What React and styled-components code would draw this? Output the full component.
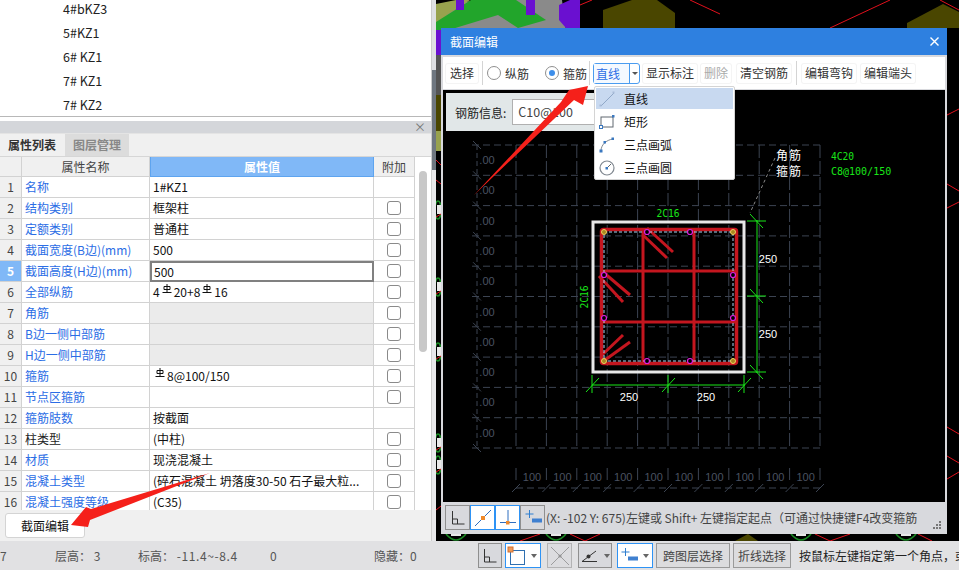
import React from 'react'
import styled, { createGlobalStyle } from 'styled-components'

const GlobalStyle = createGlobalStyle`
   html, body {
      margin: 0;
      padding: 0;
      background: #000;
   }
   body {
      font-family: 'Noto Sans CJK SC', 'Noto Sans', sans-serif;
      font-size: 12px;
      color: #111;
   }
`

const Page = styled.div`
   position: relative;
   width: 959px;
   height: 570px;
   overflow: hidden;
   display: flex;
   flex-direction: column;
`
const Main = styled.div`
   display: flex;
   height: 541px;
`

/* left side */
const LeftPanel = styled.div`
   width: 431px;
   background: #fff;
   display: flex;
   flex-direction: column;
`
const TreeList = styled.ul`
   list-style: none;
   margin: 0;
   padding: 0 0 0 63px;
   height: 116px;
   border-bottom: 1px solid #b8b8b8;
   overflow: hidden;
`
const TreeItem = styled.li`
   height: 24px;
   line-height: 18px;
   font-size: 12.5px;
   white-space: pre;
   color: #222;
`
const DockHeader = styled.div`
   margin-top: 4px;
   height: 12px;
   background: #d4d6da;
   display: flex;
   justify-content: flex-end;
   align-items: center;
   padding-right: 5px;
   color: #777;
   border-bottom: 1px solid #e4e4e4;
`
const TabBar = styled.div`
   display: flex;
   height: 22px;
   background: #f0f0f0;
`
const Tab = styled.div`
   width: 64px;
   height: 22px;
   line-height: 22px;
   text-align: center;
   font-weight: 700;
   font-size: 12px;
   margin-right: 1px;
   background: ${(p) => (p.$active ? '#f0f0f0' : '#dcdcdc')};
   color: ${(p) => (p.$active ? '#333' : '#888')};
`
const TableWrap = styled.div`
   display: flex;
   height: 355px;
   overflow: hidden;
   border-top: 1px solid #d6d6d6;
`
const Table = styled.div`
   width: 415px;
   flex: none;
`
const Row = styled.div`
   display: grid;
   grid-template-columns: 22px 128px 224px 41px;
   height: ${(p) => (p.$head ? 20 : 21)}px;
`
const Cell = styled.div`
   box-sizing: border-box;
   border-right: 1px solid #d2d2d2;
   border-bottom: 1px solid #d2d2d2;
   padding-left: 3px;
   line-height: 20px;
   font-size: 12px;
   white-space: nowrap;
   overflow: hidden;
`
const HeadCell = styled(Cell)`
   padding: 0;
   text-align: center;
   line-height: 19px;
   background: ${(p) => (p.$active ? '#80b8f7' : '#f0f0f0')};
   color: ${(p) => (p.$active ? '#fff' : '#444')};
   font-weight: ${(p) => (p.$active ? 700 : 400)};
   ${(p) => p.$active && 'border: 1px solid #5ea4ef; border-top: none;'}
`
const NumCell = styled(Cell)`
   padding: 0;
   text-align: center;
   background: ${(p) => (p.$active ? '#80b8f7' : '#f0f0f0')};
   color: ${(p) => (p.$active ? '#fff' : '#444')};
   font-weight: ${(p) => (p.$active ? 700 : 400)};
`
const NameCell = styled(Cell)`
   color: ${(p) => (p.$plain ? '#222' : '#2b6de5')};
`
const ValueCell = styled(Cell)`
   color: #111;
   background: ${(p) => (p.$locked ? '#ebebeb' : '#fff')};
   ${(p) => p.$focus && 'border: 2px solid #808080; padding-left: 2px; line-height: 17px;'}
`
const CheckCell = styled(Cell)`
   padding: 0;
   display: flex;
   align-items: center;
   justify-content: center;
`
const Check = styled.span`
   width: 12px;
   height: 12px;
   border: 1px solid #8a8a8a;
   border-radius: 3px;
   background: #fff;
`
const RebarMark = styled.svg`
   width: 10px;
   height: 10px;
   margin: 0 2px 0 2px;
   vertical-align: 3px;
`
const ScrollTrack = styled.div`
   flex: 1;
   padding: 14px 4px 0;
`
const ScrollThumb = styled.div`
   height: 181px;
   width: 8px;
   border-radius: 4px;
   background: #c8c8c8;
`
const ButtonRow = styled.div`
   flex: 1;
   background: #f0f0f0;
   padding: 3px 5px;
`
const EditButton = styled.button`
   width: 80px;
   height: 25px;
   padding: 0;
   border: 1px solid #d4d4d4;
   border-radius: 3px;
   background: #fff;
   font: inherit;
   color: #111;
`
const Splitter = styled.div`
   width: 5px;
   background: linear-gradient(#dfe0e3 70px, #6f7780 70px, #6f7780 170px, #e8e8ea 170px);
   border-left: 1px solid #ccc;
   box-sizing: border-box;
`

/* 3d view and the floating dialog */
const Viewport = styled.div`
   position: relative;
   flex: 1;
   background: #000;
`
const SceneSvg = styled.svg`
   display: block;
   width: 523px;
   height: 541px;
`
const Dialog = styled.div`
   position: absolute;
   left: 5px;
   top: 28px;
   width: 506px;
   height: 506px;
   box-sizing: border-box;
   background: #d8d9dd;
   display: flex;
   flex-direction: column;
`
const TitleBar = styled.div`
   height: 27px;
   flex: none;
   background: #2e80e0;
   color: #fff;
   display: flex;
   align-items: center;
   justify-content: space-between;
   padding: 0 8px 0 9px;
`
const ToolBar = styled.div`
   margin: 2px 2px 0;
   height: 32px;
   flex: none;
   background: #fff;
   display: flex;
   align-items: center;
   padding-left: 2px;
   box-sizing: border-box;
`
const ToolButton = styled.div`
   height: 21px;
   line-height: 20px;
   padding: 0 ${(p) => p.$pad ?? 4}px;
   margin-right: ${(p) => p.$gap ?? 0}px;
   border-radius: 3px;
   box-shadow: 0 0 0 1px #f4f4f4 inset;
   white-space: nowrap;
   color: ${(p) => (p.$disabled ? '#aaa' : '#333')};
`
const ToolSep = styled.div`
   width: 1px;
   height: 24px;
   background: #d4d4d4;
   margin: 0 ${(p) => p.$right ?? 4}px 0 ${(p) => p.$left ?? 2}px;
`
const RadioLabel = styled.label`
   display: flex;
   align-items: center;
   gap: 4px;
   margin-right: ${(p) => p.$gap ?? 0}px;
   color: #333;
`
const Radio = styled.span`
   width: 12px;
   height: 12px;
   border: 1px solid #8f8f8f;
   border-radius: 50%;
   background: #fff;
   display: flex;
   align-items: center;
   justify-content: center;
   &::after {
      content: '';
      display: ${(p) => (p.$on ? 'block' : 'none')};
      width: 6px;
      height: 6px;
      border-radius: 50%;
      background: #3d8eea;
   }
`
const Combo = styled.div`
   display: flex;
   width: 47px;
   height: 21px;
   margin-right: 2px;
   box-sizing: border-box;
   border: 1px solid #4a9cf0;
   border-radius: 3px;
   line-height: 19px;
`
const ComboText = styled.div`
   flex: 1;
   padding-left: 2px;
   color: #2b6de5;
   background: #f4f9ff;
   border-right: 1px solid #4a9cf0;
`
const ComboArrow = styled.div`
   width: 9px;
   display: flex;
   align-items: center;
   justify-content: center;
   &::after {
      content: '';
      border: 3px solid transparent;
      border-top: 3px solid #555;
      margin-top: 3px;
   }
`
const Menu = styled.div`
   position: absolute;
   left: 153px;
   top: 58px;
   width: 141px;
   height: 94px;
   box-sizing: border-box;
   padding: 1px 1px;
   background: #fff;
   border: 1px solid #d4d4d4;
   border-radius: 2px;
   z-index: 2;
`
const MenuItem = styled.div`
   display: flex;
   align-items: center;
   height: ${(p) => (p.$active ? 21 : 23)}px;
   padding-left: 3px;
   margin-bottom: ${(p) => (p.$active ? 1 : 0)}px;
   background: ${(p) => (p.$active ? '#c8d9f0' : 'transparent')};
   color: #111;
   svg {
      width: 16px;
      height: 16px;
      margin-right: 9px;
   }
`
const Drawing = styled.div`
   position: relative;
   margin: 1px 2px 0;
   height: 412px;
   flex: none;
   background: #000;
`
const DrawingSvg = styled.svg`
   display: block;
   width: 502px;
   height: 412px;
`
const InfoBar = styled.div`
   position: absolute;
   left: 3px;
   top: 3px;
   width: 160px;
   height: 38px;
   background: #e1e7e8;
   display: flex;
   align-items: center;
   padding-left: 9px;
   box-sizing: border-box;
   gap: 6px;
   color: #222;
`
const InfoInput = styled.div`
   flex: 1;
   height: 26px;
   line-height: 24px;
   box-sizing: border-box;
   border: 1px solid #b0b0b0;
   background: #fff;
   padding-left: 5px;
   font-size: 12.5px;
   color: #444;
`
const DialogFoot = styled.div`
   position: relative;
   flex: 1;
   display: flex;
   align-items: center;
   padding: 0 0 1px 4px;
   overflow: hidden;
`
const FootText = styled.div`
   margin-left: 1px;
   color: #444;
   white-space: nowrap;
`
const Grip = styled.svg`
   position: absolute;
   right: 6px;
   bottom: 5px;
   width: 8px;
   height: 8px;
`
const IconButton = styled.div`
   width: ${(p) => p.$w ?? 25}px;
   height: 25px;
   box-sizing: border-box;
   flex: none;
   margin-right: ${(p) => p.$gap ?? 0}px;
   display: flex;
   align-items: center;
   justify-content: ${(p) => (p.$w > 25 ? 'flex-start' : 'center')};
   border: ${(p) => (p.$on ? '1px solid #2e93f5' : '1px solid #8f8f8f')};
   background: ${(p) => (p.$on ? '#fff' : '#d8d9dd')};
   opacity: ${(p) => (p.$disabled ? 0.55 : 1)};
   svg {
      width: 22px;
      height: 22px;
      flex: none;
   }
`
const MiniCaret = styled.span`
   margin-left: 3px;
   border: 3px solid transparent;
   border-top: 4px solid #666;
   margin-top: 4px;
`

/* status bar */
const StatusBar = styled.div`
   height: 29px;
   background: #e1e1e3;
   display: flex;
   align-items: center;
   color: #555;
   overflow: hidden;
`
const StatusItem = styled.span`
   flex: none;
   width: ${(p) => p.$w}px;
   white-space: pre;
`
const Spaced = styled.span`
   letter-spacing: 0.6px;
`
const StatusTools = styled.div`
   display: flex;
   align-items: center;
   gap: 0;
   flex: none;
`
const TextButton = styled.div`
   height: 25px;
   line-height: 23px;
   box-sizing: border-box;
   padding: 0 ${(p) => p.$pad ?? 6}px;
   margin-right: 3px;
   border: 1px solid #9a9a9a;
   background: #dcdcde;
   color: #444;
   white-space: nowrap;
`
const Hint = styled.div`
   margin-left: 5px;
   color: #222;
   white-space: nowrap;
`
const Arrows = styled.svg`
   position: absolute;
   left: 0;
   top: 0;
   width: 959px;
   height: 570px;
   pointer-events: none;
   z-index: 5;
`

const Rebar = () => (
   <RebarMark viewBox='0 0 10 10'>
      <path d='M2 2.5h6v3H2zM0.5 8.5h9M5 0v8.5' fill='none' stroke='#111' strokeWidth='1' />
   </RebarMark>
)

const rows = [
   { n: 1, name: '名称', value: '1#KZ1', noCheck: true },
   { n: 2, name: '结构类别', value: '框架柱' },
   { n: 3, name: '定额类别', value: '普通柱' },
   { n: 4, name: '截面宽度(B边)(mm)', value: '500' },
   { n: 5, name: '截面高度(H边)(mm)', value: '500', focus: true },
   {
      n: 6,
      name: '全部纵筋',
      value: (
         <>
            4<Rebar />20+8<Rebar />16
         </>
      ),
   },
   { n: 7, name: '角筋', locked: true },
   { n: 8, name: 'B边一侧中部筋', locked: true },
   { n: 9, name: 'H边一侧中部筋', locked: true },
   {
      n: 10,
      name: '箍筋',
      value: (
         <>
            <Rebar />8@100/150
         </>
      ),
   },
   { n: 11, name: '节点区箍筋' },
   { n: 12, name: '箍筋肢数', value: '按截面', noCheck: true },
   { n: 13, name: '柱类型', value: '(中柱)', plain: true },
   { n: 14, name: '材质', value: '现浇混凝土' },
   { n: 15, name: '混凝土类型', value: '(碎石混凝土 坍落度30-50 石子最大粒...' },
   { n: 16, name: '混凝土强度等级', value: '(C35)' },
]

const range = (count) => Array.from({ length: count }, (_, i) => i)
const gridX = range(11).map((i) => 516 + i * 30.4)
const gridY = range(11).map((i) => 145 + i * 30.3)
const GRID = '#3c4452'

const Scene = () => (
   <SceneSvg viewBox='436 0 523 541'>
      <rect x='436' y='0' width='523' height='541' fill='#000' />
      {/* floor slab and beams at the top */}
      <polygon points='436,5 480,0 562,0 566,30 436,30' fill='#8a8a8a' />
      <polygon points='436,4 456,0 470,0 436,22' fill='#98a24e' />
      <polygon points='436,14 450,16 450,30 436,30' fill='#98a24e' />
      <polygon points='436,22 471,0 516,0 546,20 518,28 498,15 452,29 436,31' fill='#22a52b' />
      <rect x='456' y='0' width='8' height='10' fill='#6a10d0' />
      <rect x='526' y='0' width='9' height='15' fill='#6a10d0' />
      <polygon points='559,5 570,0 580,0 580,28 566,28 559,20' fill='#6a10d0' />
      <polygon points='603,10 632,0 657,0 675,13 675,28 603,28' fill='#4a4600' />
      <polygon points='907,23 943,4 959,12 959,28 907,28' fill='#4a4600' />
      <polyline points='580,5 592,0' stroke='#e0101c' fill='none' />
      <polyline points='830,28 890,0' stroke='#e0101c' fill='none' />
      <polyline points='940,0 959,10' stroke='#e0101c' fill='none' />
      <polyline points='690,0 720,14' stroke='#e0101c' fill='none' />
      {/* strip left of the dialog */}
      <rect x='436' y='30' width='5' height='25' fill='#6a10d0' />
      <rect x='436' y='55' width='5' height='40' fill='#555' />
      <rect x='436' y='95' width='5' height='36' fill='#4a4600' />
      <rect x='436' y='131' width='5' height='20' fill='#98a24e' />
      {[210, 287, 352, 443, 465].map((y) => (
         <g key={y}>
            <ellipse cx='438' cy={y} rx='3' ry='9' fill='none' stroke='#1a8a24' strokeWidth='1.5' />
            <rect x='437' y={y - 5} width='4' height='9' fill='#e8e8e8' />
            <line x1='436' y1={y + 7} x2='441' y2={y + 4} stroke='#e0101c' />
         </g>
      ))}
      <line x1='436' y1='160' x2='441' y2='165' stroke='#e0101c' />
      <line x1='436' y1='180' x2='441' y2='184' stroke='#e0101c' />
      <line x1='436' y1='510' x2='441' y2='506' stroke='#e0101c' />
      {/* strip right of the dialog */}
      {[
         [947, 115, 959, 109],
         [947, 184, 959, 191],
         [947, 208, 959, 202],
         [947, 427, 959, 434],
         [947, 456, 959, 463],
         [947, 479, 959, 472],
      ].map(([x1, y1, x2, y2]) => (
         <line key={y1} x1={x1} y1={y1} x2={x2} y2={y2} stroke='#e0101c' />
      ))}
      {/* strip under the dialog */}
      <polygon points='735,541 748,534 758,541' fill='#4a4600' />
      {[456, 556, 801, 906].map((x) => (
         <g key={x}>
            <path d={`M${x - 10} 534 q10 12 20 0`} fill='none' stroke='#1a8a24' strokeWidth='1.5' />
            <rect x={x - 5} y='534' width='10' height='2' fill='#e8e8e8' />
         </g>
      ))}
      <polyline points='520,541 540,534' stroke='#e0101c' fill='none' />
      <polyline points='570,534 585,541 600,534' stroke='#e0101c' fill='none' />
      <polyline points='815,534 830,541 850,534' stroke='#e0101c' fill='none' />
      <polyline points='918,534 932,541' stroke='#e0101c' fill='none' />
   </SceneSvg>
)

const Label = ({ x, y, color = '#fff', size = 11, rotate, mono, children, ...rest }) => (
   <text
      x={x}
      y={y}
      fill={color}
      fontSize={size}
      fontFamily={mono ? "'DejaVu Sans Mono', monospace" : "'Liberation Sans', sans-serif"}
      textAnchor='middle'
      transform={rotate ? `rotate(${rotate} ${x} ${y})` : undefined}
      {...rest}
   >
      {children}
   </text>
)

const Section = () => {
   const corners = [
      [604, 232],
      [733, 232],
      [604, 361],
      [733, 361],
   ]
   const mids = [
      [647, 232],
      [690, 232],
      [604, 275],
      [733, 275],
      [604, 318],
      [733, 318],
      [647, 361],
      [690, 361],
   ]
   const bars = [
      [647, 228, 673, 252],
      [643, 235, 667, 258],
      [603, 272, 630, 295],
      [599, 276, 623, 302],
      [602, 355, 623, 335],
      [605, 360, 630, 342],
   ]
   return (
      <DrawingSvg viewBox='443 90 502 412'>
         {/* background axis grid */}
         {gridY.map((y) => (
            <line key={y} x1='472' y1={y} x2='821' y2={y} stroke={GRID} strokeDasharray='7 4' />
         ))}
         {gridX.map((x) => (
            <line key={x} x1={x} y1='145' x2={x} y2='448' stroke={GRID} strokeDasharray='13 3' />
         ))}
         {gridX.map((x) => (
            <line key={x} x1={x} y1='468' x2={x} y2='480' stroke={GRID} />
         ))}
         <line x1='477' y1='145' x2='477' y2='448' stroke={GRID} strokeDasharray='5 3' />
         <line x1='516' y1='488' x2='821' y2='488' stroke={GRID} strokeDasharray='7 4' />
         {gridY.map((y) => (
            <line key={y} x1={473} y1={y - 4} x2={481} y2={y + 4} stroke={GRID} />
         ))}
         {gridX.map((x) => (
            <line key={x} x1={x - 4} y1='492' x2={x + 4} y2='484' stroke={GRID} />
         ))}
         {gridY.slice(0, 10).map((y) => (
            <Label key={y} x='487' y={y + 19} color='#4a5260'>
               .00
            </Label>
         ))}
         {gridX.slice(0, 10).map((x) => (
            <Label key={x} x={x + 16} y='481' color='#4a5260'>
               100
            </Label>
         ))}
         {/* leader and notes */}
         <line x1='775' y1='158' x2='750' y2='213' stroke='#8a8a8a' strokeDasharray='3 3' />
         <text x='776' y='160' fill='#fff' fontSize='12' letterSpacing='1' fontFamily="'Noto Sans CJK SC', sans-serif">
            角筋
         </text>
         <text x='776' y='176' fill='#fff' fontSize='12' letterSpacing='1' fontFamily="'Noto Sans CJK SC', sans-serif">
            箍筋
         </text>
         <Label x='831' y='160' color='#19e619' size='9.6' mono textAnchor='start'>
            4C20
         </Label>
         <Label x='831' y='175' color='#19e619' size='10' mono textAnchor='start'>
            C8@100/150
         </Label>
         {/* concrete outline */}
         <rect x='593' y='222' width='151' height='150' fill='none' stroke='#e8e8e8' strokeWidth='3' />
         {/* stirrups */}
         <rect x='601.5' y='229.5' width='135' height='134' rx='2' fill='none' stroke='#c4161f' strokeWidth='3.5' />
         <line x1='643' y1='228' x2='643' y2='365' stroke='#c4161f' strokeWidth='3' />
         <line x1='694' y1='228' x2='694' y2='365' stroke='#c4161f' strokeWidth='3' />
         <line x1='600' y1='271' x2='738' y2='271' stroke='#c4161f' strokeWidth='3' />
         <line x1='600' y1='322' x2='738' y2='322' stroke='#c4161f' strokeWidth='3' />
         {bars.map(([x1, y1, x2, y2]) => (
            <line key={x2 + y2} x1={x1} y1={y1} x2={x2} y2={y2} stroke='#c4161f' strokeWidth='3' />
         ))}
         <rect x='604' y='232' width='129' height='129' fill='none' stroke='#a8d4f4' strokeDasharray='3 2' />
         {corners.map(([x, y]) => (
            <circle key={x + '-' + y} cx={x} cy={y} r='2.5' fill='#a88820' stroke='#f0d060' strokeWidth='1' />
         ))}
         {mids.map(([x, y]) => (
            <circle key={x + '-' + y} cx={x} cy={y} r='2.5' fill='#000' stroke='#e020e0' strokeWidth='1.2' />
         ))}
         {/* dimensions */}
         <g stroke='#19e619' strokeWidth='1'>
            <line x1='757' y1='220' x2='757' y2='373' />
            <line x1='592' y1='385' x2='745' y2='385' />
            {[221, 296, 372].map((y) => (
               <g key={y}>
                  <line x1='747' y1={y} x2='766' y2={y} />
                  <line x1='750' y1={y - 7} x2='763' y2={y + 7} />
               </g>
            ))}
            {[592, 668, 744].map((x) => (
               <g key={x}>
                  <line x1={x} y1='375' x2={x} y2='393' />
                  <line x1={x - 6} y1='392' x2={x + 7} y2='378' />
               </g>
            ))}
         </g>
         <Label x='668' y='217' color='#19e619' size='9.6' mono>
            2C16
         </Label>
         <Label x='588' y='297' color='#19e619' size='9.6' mono rotate='-90'>
            2C16
         </Label>
         <Label x='629' y='401'>250</Label>
         <Label x='706' y='401'>250</Label>
         <Label x='768' y='263'>250</Label>
         <Label x='768' y='338'>250</Label>
      </DrawingSvg>
   )
}

const AxisIcon = () => (
   <svg viewBox='0 0 22 22'>
      <path d='M5.5 4v13h12M5.5 12h5v5' fill='none' stroke='#333' strokeWidth='1' />
   </svg>
)
const SnapLineIcon = () => (
   <svg viewBox='0 0 22 22'>
      <line x1='3' y1='19' x2='19' y2='3' stroke='#2f6fc0' />
      <rect x='9' y='9' width='4' height='4' fill='#ef8a2c' />
   </svg>
)
const SnapFootIcon = () => (
   <svg viewBox='0 0 22 22'>
      <line x1='3' y1='15.5' x2='19' y2='15.5' stroke='#2f6fc0' />
      <line x1='11' y1='3' x2='11' y2='15' stroke='#2f6fc0' />
      <rect x='9' y='14' width='3.5' height='3.5' fill='#ef8a2c' />
   </svg>
)
const OffsetIcon = () => (
   <svg viewBox='0 0 22 22'>
      <path d='M7.5 3v8M3.5 7h8' stroke='#2f7fd0' strokeWidth='1' />
      <rect x='10' y='11.5' width='10' height='4' fill='#3f80d0' />
   </svg>
)
const SelectBoxIcon = () => (
   <svg viewBox='0 0 22 22'>
      <rect x='4.5' y='5.5' width='14' height='14' fill='none' stroke='#2f6fb0' />
      <rect x='2' y='2' width='5' height='5' fill='#ef9a5a' stroke='#d07030' />
   </svg>
)
const CrossIcon = () => (
   <svg viewBox='0 0 22 22'>
      <path d='M2 2l18 18M20 2L2 20' stroke='#666' fill='none' />
      <circle cx='11' cy='11' r='1.6' fill='#555' />
   </svg>
)
const AngleIcon = () => (
   <svg viewBox='0 0 22 22'>
      <path d='M3 16.5h15M3 16.5L17 6' stroke='#333' fill='none' />
      <circle cx='9.5' cy='11.5' r='2' fill='#333' />
   </svg>
)
const LineMenuIcon = () => (
   <svg viewBox='0 0 16 16'>
      <line x1='2' y1='15' x2='15' y2='2' stroke='#90a8c8' />
      <rect x='0.5' y='13.5' width='2' height='2' fill='#a8bcd8' />
      <rect x='13.5' y='0.5' width='2' height='2' fill='#a8bcd8' />
   </svg>
)
const RectMenuIcon = () => (
   <svg viewBox='0 0 16 16'>
      <rect x='2' y='3' width='12' height='10' fill='none' stroke='#606870' />
      <rect x='0.5' y='11.5' width='3' height='3' fill='#fff' stroke='#3a78c0' />
      <rect x='13' y='1' width='2.5' height='2.5' fill='#3a78c0' />
   </svg>
)
const ArcMenuIcon = () => (
   <svg viewBox='0 0 16 16'>
      <path d='M2 14C2 8 7 3 14 2' fill='none' stroke='#808890' />
      <rect x='0.5' y='12.5' width='3' height='3' fill='#3a78c0' />
      <rect x='4.5' y='4' width='2.5' height='2.5' fill='#3a78c0' />
      <rect x='12.5' y='0.5' width='2.5' height='2.5' fill='#3a78c0' />
   </svg>
)
const CircleMenuIcon = () => (
   <svg viewBox='0 0 16 16'>
      <circle cx='8' cy='8' r='7' fill='none' stroke='#808890' strokeWidth='1.2' />
      <line x1='8' y1='8' x2='12' y2='4' stroke='#606870' />
      <rect x='6.5' y='7' width='2.5' height='2.5' fill='#3a78c0' />
   </svg>
)

const App = () => {
   return (
      <Page>
         <GlobalStyle />
         <Main>
            <LeftPanel>
               <TreeList>
                  <TreeItem>4#bKZ3</TreeItem>
                  <TreeItem>5#KZ1</TreeItem>
                  <TreeItem>6# KZ1</TreeItem>
                  <TreeItem>7# KZ1</TreeItem>
                  <TreeItem>7# KZ2</TreeItem>
               </TreeList>
               <DockHeader>×</DockHeader>
               <TabBar>
                  <Tab $active>属性列表</Tab>
                  <Tab>图层管理</Tab>
               </TabBar>
               <TableWrap>
                  <Table>
                     <Row $head>
                        <HeadCell />
                        <HeadCell>属性名称</HeadCell>
                        <HeadCell $active>属性值</HeadCell>
                        <HeadCell>附加</HeadCell>
                     </Row>
                     {rows.map((r) => (
                        <Row key={r.n}>
                           <NumCell $active={r.focus}>{r.n}</NumCell>
                           <NameCell $plain={r.plain}>{r.name}</NameCell>
                           <ValueCell $locked={r.locked} $focus={r.focus}>
                              {r.value}
                           </ValueCell>
                           <CheckCell>{!r.noCheck && <Check />}</CheckCell>
                        </Row>
                     ))}
                  </Table>
                  <ScrollTrack>
                     <ScrollThumb />
                  </ScrollTrack>
               </TableWrap>
               <ButtonRow>
                  <EditButton>截面编辑</EditButton>
               </ButtonRow>
            </LeftPanel>
            <Splitter />
            <Viewport>
               <Scene />
               <Dialog>
                  <TitleBar>
                     <span>截面编辑</span>
                     <svg width='9' height='9' viewBox='0 0 9 9'>
                        <path d='M0.5 0.5l8 8M8.5 0.5l-8 8' stroke='#fff' strokeWidth='1.4' />
                     </svg>
                  </TitleBar>
                  <ToolBar>
                     <ToolButton $pad={5}>选择</ToolButton>
                     <ToolSep $left={3} $right={4} />
                     <RadioLabel $gap={16}>
                        <Radio />
                        纵筋
                     </RadioLabel>
                     <RadioLabel>
                        <Radio $on />
                        箍筋
                     </RadioLabel>
                     <ToolSep $left={2} $right={3} />
                     <Combo>
                        <ComboText>直线</ComboText>
                        <ComboArrow />
                     </Combo>
                     <ToolButton $gap={2}>显示标注</ToolButton>
                     <ToolButton $disabled $gap={4}>删除</ToolButton>
                     <ToolButton>清空钢筋</ToolButton>
                     <ToolSep $left={4} $right={4} />
                     <ToolButton $gap={3}>编辑弯钩</ToolButton>
                     <ToolButton>编辑端头</ToolButton>
                  </ToolBar>
                  <Menu>
                     <MenuItem $active>
                        <LineMenuIcon />
                        直线
                     </MenuItem>
                     <MenuItem>
                        <RectMenuIcon />
                        矩形
                     </MenuItem>
                     <MenuItem>
                        <ArcMenuIcon />
                        三点画弧
                     </MenuItem>
                     <MenuItem>
                        <CircleMenuIcon />
                        三点画圆
                     </MenuItem>
                  </Menu>
                  <Drawing>
                     <Section />
                     <InfoBar>
                        钢筋信息:
                        <InfoInput>C10@100</InfoInput>
                     </InfoBar>
                  </Drawing>
                  <DialogFoot>
                     <IconButton>
                        <AxisIcon />
                     </IconButton>
                     <IconButton $on>
                        <SnapLineIcon />
                     </IconButton>
                     <IconButton $on>
                        <SnapFootIcon />
                     </IconButton>
                     <IconButton>
                        <OffsetIcon />
                     </IconButton>
                     <FootText>(X: -102 Y: 675)左键或 Shift+ 左键指定起点（可通过快捷键F4改变箍筋</FootText>
                     <Grip viewBox='0 0 8 8'>
                        <path d='M6 0h2v2H6zM3 3h2v2H3zM6 3h2v2H6zM0 6h2v2H0zM3 6h2v2H3zM6 6h2v2H6z' fill='#777' />
                     </Grip>
                  </DialogFoot>
               </Dialog>
            </Viewport>
         </Main>
         <StatusBar>
            <StatusItem $w={55}>7</StatusItem>
            <StatusItem $w={83}>层高： 3</StatusItem>
            <StatusItem $w={132}>
               标高： <Spaced>-11.4~-8.4</Spaced>
            </StatusItem>
            <StatusItem $w={104}>0</StatusItem>
            <StatusItem $w={104}>隐藏：0</StatusItem>
            <StatusTools>
               <IconButton $gap={3} $w={24}>
                  <AxisIcon />
               </IconButton>
               <IconButton $on $w={36} $gap={6}>
                  <SelectBoxIcon />
                  <MiniCaret />
               </IconButton>
               <IconButton $disabled $gap={6}>
                  <CrossIcon />
               </IconButton>
               <IconButton $w={34} $gap={5}>
                  <AngleIcon />
                  <MiniCaret />
               </IconButton>
               <IconButton $on $w={36} $gap={3}>
                  <OffsetIcon />
                  <MiniCaret />
               </IconButton>
               <TextButton>跨图层选择</TextButton>
               <TextButton $pad={4}>折线选择</TextButton>
            </StatusTools>
            <Hint>按鼠标左键指定第一个角点，或</Hint>
         </StatusBar>
         <Arrows viewBox='0 0 959 570'>
            <polygon points='474,195 561,102 569,90 588,86 583,105 574,100' fill='#f5201a' />
            <polygon points='210,473 91,509 86,507 71,525 88,527 90,520' fill='#f5201a' />
         </Arrows>
      </Page>
   )
}

export default App
